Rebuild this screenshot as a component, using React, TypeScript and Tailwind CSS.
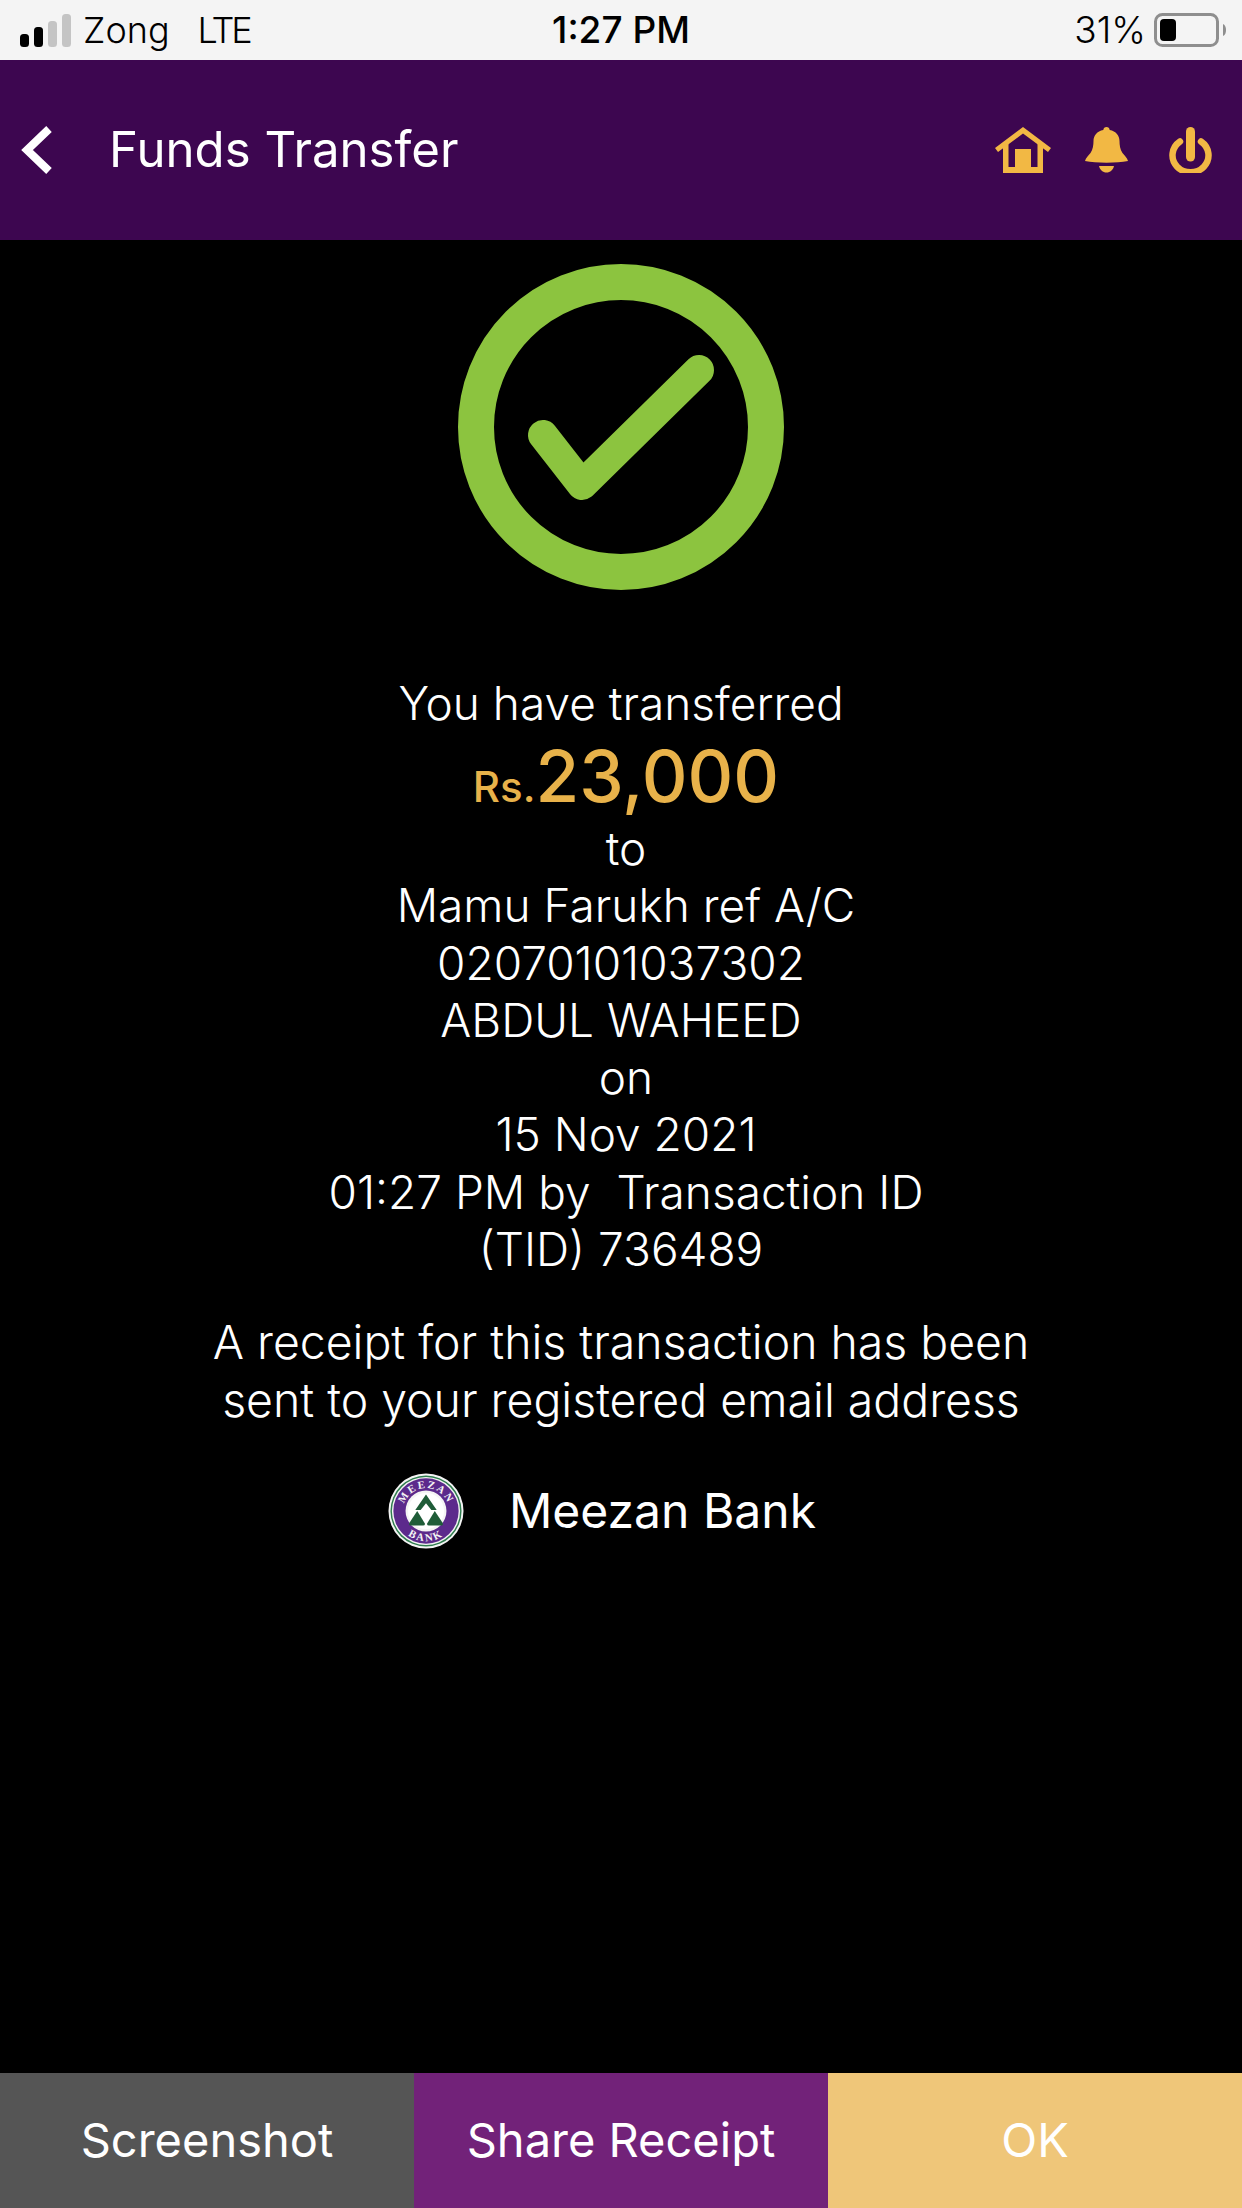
const details = [
  { text: 'to', shift: 'pl-[10px]' },
  { text: 'Mamu Farukh ref A/C', shift: 'pl-[10px]' },
  { text: '02070101037302', shift: 'pl-0' },
  { text: 'ABDUL WAHEED', shift: 'pl-0' },
  { text: 'on', shift: 'pl-[10px]' },
  { text: '15 Nov 2021', shift: 'pl-[10px]' },
  { text: '01:27 PM by\u00a0 Transaction ID', shift: 'pl-[10px]' },
  { text: '(TID) 736489', shift: 'pl-0' },
]

function SignalBars() {
  return (
    <svg width="51" height="33" viewBox="0 0 51 33" className="shrink-0">
      <rect x="0" y="20" width="9" height="13" rx="3.500" fill="#000" />
      <rect x="14" y="13" width="9" height="20" rx="3.500" fill="#000" />
      <rect x="28" y="7" width="9" height="26" rx="3.500" fill="#c4c4c4" />
      <rect x="42" y="0" width="9" height="33" rx="3.500" fill="#c4c4c4" />
    </svg>
  )
}

function Battery() {
  return (
    <svg width="72" height="34" viewBox="0 0 72 34" className="shrink-0">
      <rect x="1.500" y="1.500" width="62" height="31" rx="7" fill="none" stroke="#8e8e8e" strokeWidth="3" />
      <rect x="6" y="6" width="16" height="22" rx="4" fill="#000" />
      <path d="M69 11c2.500 1 3 4 3 6s-.5 5-3 6z" fill="#8e8e8e" />
    </svg>
  )
}

function HomeIcon() {
  return (
    <svg width="56" height="46" viewBox="0 0 56 46">
      <path d="M28 0L56 21L53 25L28 6.500L3 25L0 21Z" fill="#f2b844" />
      <path d="M8 19L13.500 15V40H20V22H36V40H42.500V15L48 19V46H8Z" fill="#f2b844" />
    </svg>
  )
}

function BellIcon() {
  return (
    <svg width="43" height="46" viewBox="0 0 43 46">
      <path d="M21.500 0c1.800 0 3 1 3.200 3 6.300 1.200 9.800 5.500 9.800 11 0 4 .6 8.500 3 12 1.800 2.500 4.800 4.500 5.500 8-6 1.200-13.200 1.700-21.500 1.700S6 35.200 0 34c.7-3.500 3.700-5.500 5.500-8 2.400-3.500 3-8 3-12 0-5.500 3.500-9.800 9.800-11 .2-2 1.400-3 3.200-3z" fill="#f2b844" />
      <path d="M14 39h15c-1 4-3.800 6.500-7.500 6.500S15 43 14 39z" fill="#f2b844" />
    </svg>
  )
}

function PowerIcon() {
  return (
    <svg width="43" height="46" viewBox="0 0 43 46">
      <path d="M11 14.500A18 17 0 1 0 32 14.500" fill="none" stroke="#f2b844" strokeWidth="6.500" strokeLinecap="round" />
      <line x1="21.500" y1="4.500" x2="21.500" y2="30" stroke="#f2b844" strokeWidth="9" strokeLinecap="round" />
    </svg>
  )
}

function SuccessMark() {
  return (
    <svg width="328" height="328" viewBox="0 0 328 328">
      <circle cx="164" cy="164" r="145" fill="none" stroke="#8cc43f" strokeWidth="36" />
      <path d="M86 172L125 222L242 107" fill="none" stroke="#8cc43f" strokeWidth="30" strokeLinecap="round" strokeLinejoin="round" />
    </svg>
  )
}

function MeezanLogo() {
  return (
    <svg width="76" height="76" viewBox="0 0 78 78" className="shrink-0">
      <defs>
        <path id="logoTop" d="M15.500 39a23.500 23.500 0 0 1 47 0" />
        <path id="logoBottom" d="M8 39a31 31 0 0 0 62 0" />
      </defs>
      <circle cx="39" cy="39" r="38.500" fill="#f4f4f4" />
      <circle cx="39" cy="39" r="36.500" fill="#2f7d4f" />
      <circle cx="39" cy="39" r="35" fill="#f4f4f4" />
      <circle cx="39" cy="39" r="33.500" fill="#5c2a8c" />
      <circle cx="39" cy="39" r="21" fill="#f4f4f4" />
      <circle cx="39" cy="39" r="18.500" fill="#ffffff" />
      <text fontFamily="Liberation Serif, serif" fontSize="11" fontWeight="700" fill="#f4f4f4" letterSpacing="1.800">
        <textPath href="#logoTop" startOffset="50%" textAnchor="middle">MEEZAN</textPath>
      </text>
      <text fontFamily="Liberation Serif, serif" fontSize="11" fontWeight="700" fill="#f4f4f4" letterSpacing="2">
        <textPath href="#logoBottom" startOffset="50%" textAnchor="middle">BANK</textPath>
      </text>
      <path d="M39 22L50 38L44.500 38L39 31L33.500 38L28 38Z" fill="#1f5c38" />
      <path d="M30 39L38 52Q38 54 36 54H23Q21 54 22 51Z" fill="#1f5c38" />
      <path d="M48 39L40 52Q40 54 42 54H55Q57 54 56 51Z" fill="#1f5c38" />
    </svg>
  )
}

export default function App() {
  return (
    <div className="w-[1242px] h-[2208px] flex flex-col bg-black text-white font-['Inter',sans-serif]">
      {/* status bar */}
      <div className="h-[60px] shrink-0 bg-[#f4f4f4] text-black pl-[20px] pr-[16px] flex items-center justify-between relative">
        <div className="flex items-center">
          <SignalBars />
          <span className="ml-[12px] text-[36px] font-light">Zong</span>
          <span className="ml-[28px] text-[36px] font-light tracking-[-3px]">LTE</span>
        </div>
        <span className="absolute left-0 right-0 text-center text-[37px] font-medium">1:27 PM</span>
        <div className="flex items-center gap-[8px]">
          <span className="text-[37px] font-light">31%</span>
          <Battery />
        </div>
      </div>

      {/* header */}
      <div className="h-[180px] shrink-0 bg-[#3d0650] flex items-center justify-between pl-[20px] pr-[30px]">
        <div className="flex items-center gap-[55px]">
          <svg width="34" height="50" viewBox="0 0 34 50">
            <path d="M29 4L7 25L29 46" fill="none" stroke="#fff" strokeWidth="8" />
          </svg>
          <span className="text-[49.200px] font-normal">Funds Transfer</span>
        </div>
        <div className="flex items-center">
          <HomeIcon />
          <div className="ml-[34px]"><BellIcon /></div>
          <div className="ml-[41px]"><PowerIcon /></div>
        </div>
      </div>

      {/* confirmation */}
      <div className="flex-1 flex flex-col items-center pt-[23px]">
        <SuccessMark />
        <div className="mt-[84px] text-[46px] font-light leading-[57px] text-center">You have transferred</div>
        <div className="h-[88px] flex items-baseline justify-center text-[#e8b24a] pl-[10px]">
          <span className="text-[42px] font-medium">Rs.</span>
          <span className="text-[71px] font-medium leading-[88px]">23,000</span>
        </div>
        <div className="flex flex-col items-center text-[46px] font-light leading-[57.300px]">
          {details.map((line) => (
            <div key={line.text} className={line.shift}>{line.text}</div>
          ))}
        </div>
        <div className="mt-[36px] text-[46.400px] font-light leading-[57.500px] text-center">
          <div>A receipt for this transaction has been</div>
          <div>sent to your registered email address</div>
        </div>
        <div className="mt-[44px] flex items-center gap-[45px] pr-[38px]">
          <MeezanLogo />
          <span className="text-[48px] font-normal">Meezan Bank</span>
        </div>
      </div>

      {/* actions */}
      <div className="h-[135px] shrink-0 grid grid-cols-3 text-[47px] text-center">
        <div className="bg-[#555555] flex items-center justify-center">Screenshot</div>
        <div className="bg-[#722279] flex items-center justify-center">Share Receipt</div>
        <div className="bg-[#efc679] flex items-center justify-center">OK</div>
      </div>
    </div>
  )
}
